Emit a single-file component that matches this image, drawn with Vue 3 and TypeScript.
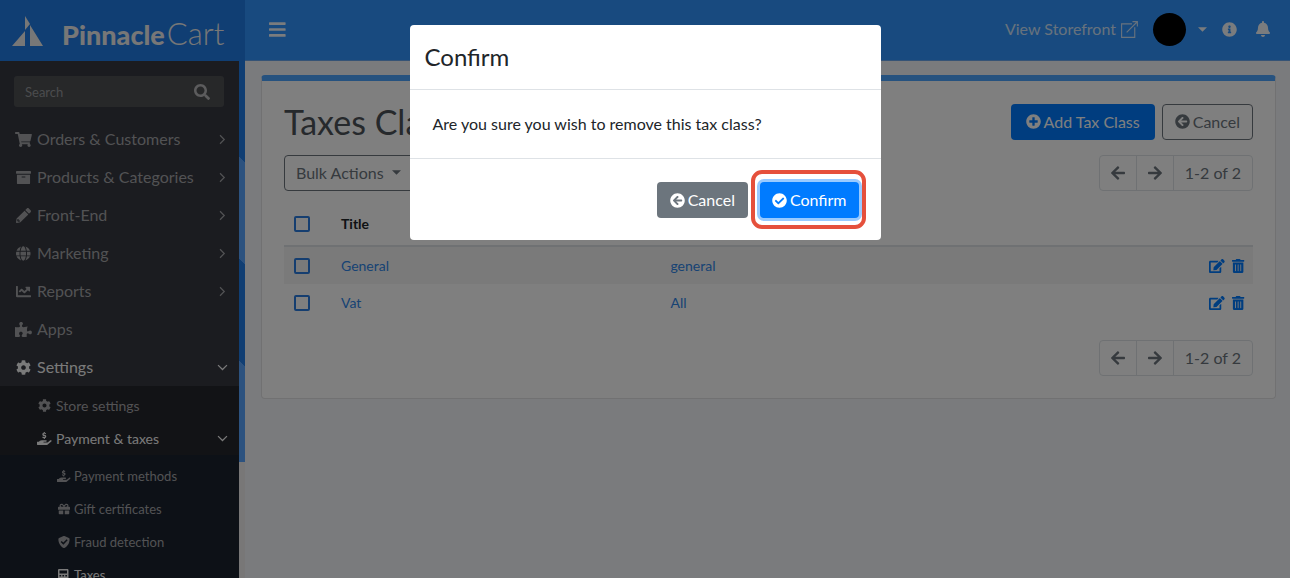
<script setup lang="ts">
import { defineComponent, h, ref } from 'vue'

interface Glyph { w: number; d: string; line?: number }

const glyphs: Record<string, Glyph> = {
  bars: { w: 448, d: 'M16 132h416c8.8 0 16-7.2 16-16V76c0-8.800-7.200-16-16-16H16C7.200 60 0 67.200 0 76v40c0 8.800 7.200 16 16 16zm0 160h416c8.800 0 16-7.200 16-16v-40c0-8.800-7.200-16-16-16H16c-8.800 0-16 7.200-16 16v40c0 8.800 7.200 16 16 16zm0 160h416c8.800 0 16-7.200 16-16v-40c0-8.800-7.200-16-16-16H16c-8.800 0-16 7.200-16 16v40c0 8.800 7.200 16 16 16z' },
  search: { w: 512, d: 'M505 442.7L405.3 343c-4.5-4.5-10.6-7-17-7H372c27.600-35.300 44-79.700 44-128C416 93.100 322.900 0 208 0S0 93.100 0 208s93.100 208 208 208c48.300 0 92.700-16.400 128-44v16.300c0 6.400 2.500 12.500 7 17l99.700 99.700c9.400 9.400 24.600 9.400 33.900 0l28.300-28.300c9.400-9.400 9.400-24.600.1-34zM208 336c-70.700 0-128-57.200-128-128 0-70.700 57.200-128 128-128 70.700 0 128 57.200 128 128 0 70.700-57.200 128-128 128z' },
  cart: { w: 576, d: 'M528.12 301.319l47.273-208C578.806 78.301 567.391 64 551.99 64H159.208l-9.166-44.81C147.758 8.021 137.93 0 126.529 0H24C10.745 0 0 10.745 0 24v16c0 13.255 10.745 24 24 24h69.883l70.248 343.435C147.325 417.1 136 435.222 136 456c0 30.928 25.072 56 56 56s56-25.072 56-56c0-15.674-6.447-29.835-16.824-40h209.647C430.447 426.165 424 440.326 424 456c0 30.928 25.072 56 56 56s56-25.072 56-56c0-22.172-12.888-41.332-31.579-50.405l5.517-24.276c3.413-15.018-8.002-29.319-23.403-29.319H218.117l-6.545-32h293.145c11.206 0 20.92-7.754 23.403-18.681z' },
  archive: { w: 512, d: 'M32 448c0 17.7 14.3 32 32 32h384c17.7 0 32-14.3 32-32V160H32v288zm160-212c0-6.6 5.4-12 12-12h104c6.6 0 12 5.4 12 12v8c0 6.6-5.4 12-12 12H204c-6.6 0-12-5.4-12-12v-8zM480 32H32C14.3 32 0 46.3 0 64v48c0 8.8 7.2 16 16 16h480c8.8 0 16-7.2 16-16V64c0-17.7-14.3-32-32-32z' },
  pencil: { w: 512, d: 'M497.9 142.1l-46.1 46.1c-4.7 4.7-12.3 4.7-17 0l-111-111c-4.7-4.7-4.7-12.3 0-17l46.1-46.1c18.7-18.7 49.1-18.7 67.9 0l60.1 60.1c18.8 18.7 18.8 49.1 0 67.9zM284.2 99.8L21.6 362.4.4 483.9c-2.9 16.4 11.4 30.6 27.8 27.8l121.5-21.3 262.6-262.6c4.7-4.7 4.7-12.3 0-17l-111-111c-4.8-4.7-12.4-4.7-17.1 0zM88 424h48v36.300l-64.500 11.300-31.100-31.100L51.700 376H88v48z' },
  globe: { w: 496, d: 'M336.5 160C322 70.7 287.8 8 248 8s-74 62.7-88.5 152h177zM152 256c0 22.2 1.2 43.5 3.3 64h185.3c2.1-20.5 3.3-41.8 3.3-64s-1.2-43.5-3.3-64H155.3c-2.1 20.5-3.3 41.8-3.3 64zm324.7-96c-28.6-67.9-86.5-120.4-158-141.6 24.4 33.8 41.2 84.7 50 141.6h108zM177.2 18.4C105.8 39.6 47.8 92.1 19.3 160h108c8.7-56.9 25.5-107.8 49.9-141.6zM487.4 192H372.7c2.1 21 3.3 42.5 3.3 64s-1.2 43-3.3 64h114.6c5.5-20.5 8.6-41.8 8.6-64s-3.1-43.5-8.5-64zM120 256c0-21.5 1.2-43 3.3-64H8.6C3.2 212.5 0 233.8 0 256s3.2 43.5 8.6 64h114.6c-2-21-3.2-42.5-3.2-64zm39.5 96c14.5 89.3 48.7 152 88.5 152s74-62.7 88.5-152h-177zm159.3 141.6c71.4-21.2 129.4-73.7 158-141.6h-108c-8.8 56.9-25.6 107.8-50 141.6zM19.3 352c28.6 67.9 86.5 120.4 158 141.6-24.4-33.8-41.2-84.7-50-141.6h-108z' },
  chart: { w: 512, d: 'M496 384H64V80c0-8.84-7.16-16-16-16H16C7.16 64 0 71.16 0 80v336c0 17.67 14.33 32 32 32h464c8.84 0 16-7.16 16-16v-32c0-8.84-7.16-16-16-16zM464 96H345.94c-21.38 0-32.09 25.85-16.97 40.97l32.4 32.4L288 242.75l-73.37-73.37c-12.5-12.5-32.76-12.5-45.25 0l-68.69 68.69c-6.25 6.25-6.25 16.38 0 22.63l22.62 22.62c6.25 6.25 16.38 6.25 22.63 0L192 237.25l73.37 73.37c12.5 12.5 32.76 12.5 45.25 0l96-96 32.4 32.4c15.12 15.12 40.97 4.41 40.97-16.97V112c.01-8.84-7.15-16-15.99-16z' },
  puzzle: { w: 576, d: 'M519.442 288.651c-41.519 0-59.5 31.593-82.058 31.593C377.409 320.244 432 144 432 144s-196.288 80-196.288-3.297c0-35.827 36.288-46.25 36.288-85.985C272 19.216 243.885 0 210.539 0c-34.654 0-66.366 18.891-66.366 56.346 0 41.364 31.711 59.277 31.711 81.75C175.885 207.719 0 166.758 0 166.758v333.237s178.635 41.047 178.635-28.662c0-22.473-40-40.107-40-81.471 0-37.456 29.25-56.346 63.577-56.346 33.673 0 61.788 19.216 61.788 54.717 0 39.735-36.288 50.158-36.288 85.985 0 60.803 129.675 25.73 181.23 25.73 0 0-34.725-120.101 25.827-120.101 35.962 0 46.423 36.152 86.308 36.152C556.712 416 576 387.99 576 354.443c0-34.199-18.962-65.792-56.558-65.792z' },
  cog: { w: 512, d: 'M487.4 315.7l-42.6-24.6c4.3-23.2 4.3-47 0-70.2l42.6-24.6c4.9-2.8 7.1-8.6 5.5-14-11.1-35.6-30-67.8-54.7-94.6-3.8-4.1-10-5.1-14.8-2.3L380.8 110c-17.9-15.4-38.5-27.3-60.8-35.1V25.8c0-5.6-3.9-10.5-9.4-11.7-36.7-8.2-74.3-7.8-109.2 0-5.5 1.2-9.4 6.1-9.4 11.7V75c-22.2 7.9-42.8 19.8-60.8 35.1L88.7 85.5c-4.9-2.8-11-1.9-14.8 2.3-24.7 26.7-43.6 58.9-54.7 94.6-1.7 5.4.6 11.2 5.5 14L67.3 221c-4.3 23.2-4.3 47 0 70.2l-42.6 24.6c-4.9 2.8-7.1 8.6-5.5 14 11.1 35.6 30 67.8 54.7 94.6 3.8 4.1 10 5.1 14.8 2.3l42.6-24.6c17.9 15.4 38.5 27.3 60.8 35.1v49.2c0 5.6 3.9 10.5 9.4 11.7 36.7 8.2 74.3 7.8 109.2 0 5.5-1.2 9.4-6.1 9.4-11.7v-49.2c22.2-7.9 42.8-19.8 60.8-35.1l42.6 24.6c4.9 2.8 11 1.9 14.8-2.3 24.7-26.7 43.6-58.9 54.7-94.6 1.5-5.5-.7-11.3-5.6-14.1zM256 336c-44.1 0-80-35.9-80-80s35.900-80 80-80 80 35.900 80 80-35.900 80-80 80z' },
  hand: { w: 576, d: 'M565.3 328.1c-11.8-10.7-30.2-10-42.6 0L430.3 402c-11.3 9.1-25.4 14-40 14H272c-8.8 0-16-7.2-16-16s7.200-16 16-16h78.300c15.900 0 30.700-10.900 33.300-26.600 3.300-20-12.100-37.400-31.600-37.400H192c-27 0-53.100 9.300-74.100 26.300L71.400 384H16c-8.800 0-16 7.200-16 16v96c0 8.800 7.200 16 16 16h356.800c14.500 0 28.600-4.900 40-14L564 377c15.200-12.100 16.400-35.300 1.300-48.900zM266 0h44v32c20 2 36 9 49 18l-23 36c-17-11-32-15-47-15-16 0-25 6-25 15 0 11 12 15 38 23 38 12 63 29 63 66 0 34-22 57-55 64v33h-44v-32c-24-2-45-11-61-24l25-35c17 13 34 19 52 19 19 0 29-6 29-17 0-12-14-17-40-25-36-11-61-28-61-64 0-32 21-54 55-61z' },
  gift: { w: 512, d: 'M32 448c0 17.7 14.3 32 32 32h160V320H32v128zm256 32h160c17.7 0 32-14.3 32-32V320H288v160zm192-320h-42.1c6.2-12.1 10.1-25.5 10.1-40 0-48.5-39.5-88-88-88-41.6 0-68.5 21.3-103 68.3-34.5-47-61.4-68.3-103-68.3-48.5 0-88 39.5-88 88 0 14.5 3.8 27.9 10.1 40H32c-17.7 0-32 14.3-32 32v80c0 8.8 7.2 16 16 16h480c8.8 0 16-7.2 16-16v-80c0-17.7-14.3-32-32-32zm-326.1 0c-22.1 0-40-17.9-40-40s17.9-40 40-40c19.9 0 34.6 3.3 86.1 80h-86.1zm206.1 0h-86.1c51.400-76.500 65.700-80 86.100-80 22.100 0 40 17.900 40 40s-17.900 40-40 40z' },
  shield: { w: 512, d: 'M466.5 83.700l-192-80a48 48 0 0 0-36.900 0l-192 80C27.700 91.100 16 108.600 16 128c0 198.500 114.500 335.700 221.500 380.300 11.800 4.900 25.100 4.900 36.900 0C360.100 472.600 496 349.300 496 128c0-19.400-11.700-36.900-29.500-44.300zM228 370L112 254l44-44 72 72 140-140 44 44z' },
  calculator: { w: 448, d: 'M48 0h352c26 0 48 22 48 48v416c0 26-22 48-48 48H48c-26 0-48-22-48-48V48C0 22 22 0 48 0zm16 64v128h320V64zm0 192v64h72v-64zm124 0v64h72v-64zm124 0v64h72v-64zM64 384v64h72v-64zm124 0v64h72v-64zm124 0v64h72v-64z' },
  plusCircle: { w: 512, d: 'M256 8C119 8 8 119 8 256s111 248 248 248 248-111 248-248S393 8 256 8zm144 276c0 6.6-5.4 12-12 12h-92v92c0 6.6-5.4 12-12 12h-56c-6.6 0-12-5.4-12-12v-92h-92c-6.6 0-12-5.4-12-12v-56c0-6.6 5.4-12 12-12h92v-92c0-6.6 5.4-12 12-12h56c6.6 0 12 5.4 12 12v92h92c6.6 0 12 5.4 12 12v56z' },
  backCircle: { w: 512, d: 'M256 504C119 504 8 393 8 256S119 8 256 8s248 111 248 248-111 248-248 248zm28.9-143.6L209.4 288H392c13.3 0 24-10.7 24-24v-16c0-13.3-10.7-24-24-24H209.4l75.5-72.4c9.7-9.3 9.9-24.8.4-34.3l-11-10.9c-9.4-9.4-24.6-9.4-33.9 0L107.7 239c-9.4 9.4-9.4 24.6 0 33.9l132.7 132.7c9.4 9.4 24.6 9.4 33.9 0l11-10.9c9.5-9.5 9.3-25-.4-34.3z' },
  checkCircle: { w: 512, d: 'M504 256c0 136.967-111.033 248-248 248S8 392.967 8 256 119.033 8 256 8s248 111.033 248 248zM227.314 387.314l184-184c6.248-6.248 6.248-16.379 0-22.627l-22.627-22.627c-6.248-6.249-16.379-6.249-22.628 0L216 308.118l-70.059-70.059c-6.248-6.248-16.379-6.248-22.628 0l-22.627 22.627c-6.248 6.248-6.248 16.379 0 22.627l104 104c6.249 6.249 16.379 6.249 22.628.001z' },
  arrowLeft: { w: 448, d: 'M257.5 445.1l-22.2 22.2c-9.4 9.4-24.6 9.4-33.9 0L7 273c-9.4-9.4-9.4-24.6 0-33.9L201.4 44.7c9.4-9.4 24.6-9.4 33.9 0l22.2 22.2c9.5 9.5 9.3 25-.4 34.3L136.6 216H424c13.3 0 24 10.7 24 24v32c0 13.3-10.7 24-24 24H136.6l120.5 114.8c9.8 9.3 10 24.8.4 34.3z' },
  arrowRight: { w: 448, d: 'M190.5 66.9l22.2-22.2c9.4-9.4 24.6-9.4 33.9 0L441 239c9.4 9.4 9.4 24.6 0 33.9L246.6 467.3c-9.4 9.4-24.6 9.4-33.9 0l-22.2-22.2c-9.5-9.5-9.3-25 .4-34.3L311.4 296H24c-13.3 0-24-10.7-24-24v-32c0-13.3 10.7-24 24-24h287.4L190.9 101.2c-9.8-9.3-10-24.8-.4-34.3z' },
  edit: { w: 576, d: 'M402.6 83.2l90.2 90.2c3.8 3.8 3.8 10 0 13.8L274.4 405.6l-92.8 10.3c-12.4 1.4-22.9-9.1-21.5-21.5l10.3-92.8L388.8 83.2c3.8-3.8 10-3.8 13.8 0zm162-22.9l-48.8-48.8c-15.2-15.2-39.9-15.2-55.2 0l-35.4 35.4c-3.8 3.8-3.8 10 0 13.8l90.2 90.2c3.8 3.8 10 3.8 13.8 0l35.4-35.4c15.2-15.3 15.2-40 0-55.2zM384 346.2V448H64V128h229.8c3.2 0 6.2-1.3 8.5-3.5l40-40c7.6-7.6 2.2-20.5-8.5-20.5H48C21.5 64 0 85.5 0 112v352c0 26.5 21.5 48 48 48h352c26.5 0 48-21.5 48-48V306.2c0-10.7-12.9-16-20.5-8.5l-40 40c-2.2 2.3-3.5 5.3-3.5 8.5z' },
  trash: { w: 448, d: 'M32 464a48 48 0 0 0 48 48h288a48 48 0 0 0 48-48V128H32zm272-256a16 16 0 0 1 32 0v224a16 16 0 0 1-32 0zm-96 0a16 16 0 0 1 32 0v224a16 16 0 0 1-32 0zm-96 0a16 16 0 0 1 32 0v224a16 16 0 0 1-32 0zM432 32H312l-9.4-18.7A24 24 0 0 0 281.1 0H166.8a23.72 23.72 0 0 0-21.4 13.3L136 32H16A16 16 0 0 0 0 48v32a16 16 0 0 0 16 16h416a16 16 0 0 0 16-16V48a16 16 0 0 0-16-16z' },
  info: { w: 512, d: 'M256 8C119 8 8 119 8 256c0 137 111 248 248 248s248-111 248-248C504 119 393 8 256 8zm0 110c23.2 0 42 18.8 42 42s-18.8 42-42 42-42-18.8-42-42 18.800-42 42-42zm56 254c0 6.600-5.400 12-12 12h-88c-6.600 0-12-5.400-12-12v-24c0-6.600 5.400-12 12-12h12v-64h-12c-6.600 0-12-5.400-12-12v-24c0-6.600 5.400-12 12-12h64c6.600 0 12 5.400 12 12v100h12c6.600 0 12 5.400 12 12v24z' },
  bell: { w: 448, d: 'M224 512c35.32 0 63.97-28.65 63.97-64H160.03c0 35.35 28.65 64 63.97 64zm215.39-149.71c-19.32-20.76-55.47-51.99-55.47-154.29 0-77.7-54.48-139.9-127.94-155.16V32c0-17.67-14.32-32-31.98-32s-31.98 14.33-31.98 32v20.84C118.56 68.1 64.08 130.3 64.08 208c0 102.3-36.15 133.53-55.47 154.29-6 6.45-8.66 14.16-8.61 21.71.11 16.4 12.98 32 32.1 32h383.8c19.12 0 32-15.6 32.1-32 .05-7.55-2.61-15.27-8.61-21.71z' },
  external: { w: 512, line: 34, d: 'M330 85H18v409h396V190M170 342L490 22M345 20h148v148' },
  chevronRight: { w: 320, line: 48, d: 'M80 90l166 166L80 422' },
  chevronDown: { w: 512, line: 48, d: 'M80 160l176 176 176-176' },
  caret: { w: 512, d: 'M0 128h512L256 384z' },
}

const Icon = defineComponent({
  props: { name: { type: String, required: true } },
  setup(props) {
    return () => {
      const g = glyphs[props.name]
      return h('svg', { class: 'icon', viewBox: `0 0 ${g.w} 512`, 'aria-hidden': 'true' }, [
        h('path', g.line
          ? { d: g.d, fill: 'none', stroke: 'currentColor', 'stroke-width': g.line }
          : { d: g.d, fill: 'currentColor', 'fill-rule': 'evenodd' }),
      ])
    }
  },
})

const menu = [
  { label: 'Orders & Customers', icon: 'cart', arrow: 'chevronRight' },
  { label: 'Products & Categories', icon: 'archive', arrow: 'chevronRight' },
  { label: 'Front-End', icon: 'pencil', arrow: 'chevronRight' },
  { label: 'Marketing', icon: 'globe', arrow: 'chevronRight' },
  { label: 'Reports', icon: 'chart', arrow: 'chevronRight' },
  { label: 'Apps', icon: 'puzzle', arrow: '' },
  { label: 'Settings', icon: 'cog', arrow: 'chevronDown', active: true },
]
const paymentMenu = [
  { label: 'Payment methods', icon: 'hand' },
  { label: 'Gift certificates', icon: 'gift' },
  { label: 'Fraud detection', icon: 'shield' },
  { label: 'Taxes', icon: 'calculator', active: true },
]
const rows = ref([
  { title: 'General', key: 'general', selected: false },
  { title: 'Vat', key: 'All', selected: false },
])
const search = ref('')
const allSelected = ref(false)
</script>

<template>
  <div class="app">
    <aside class="side">
      <a class="brand" href="#" aria-label="PinnacleCart">
        <svg class="mark" viewBox="0 0 32 32" aria-hidden="true">
          <path fill="currentColor" d="M13 1l5 8-5 6zM0 31L13 16v15zM18 10l13 21H18z" />
        </svg>
        <span class="word"><b>Pinnacle</b><span class="thin">Cart</span></span>
      </a>
      <div class="side-body">
        <nav class="nav">
          <form class="search" @submit.prevent>
            <input v-model="search" type="search" placeholder="Search" aria-label="Search">
            <button type="submit" aria-label="Search"><Icon name="search" /></button>
          </form>
          <a v-for="m in menu" :key="m.label" class="item" :class="{ active: m.active }" href="#">
            <span class="lead"><Icon :name="m.icon" /></span>{{ m.label }}
            <span v-if="m.arrow" class="arrow"><Icon :name="m.arrow" /></span>
          </a>
          <div class="sub">
            <a class="item" href="#"><span class="lead"><Icon name="cog" /></span>Store settings</a>
            <a class="item active" href="#">
              <span class="lead"><Icon name="hand" /></span>Payment &amp; taxes
              <span class="arrow"><Icon name="chevronDown" /></span>
            </a>
          </div>
          <div class="sub deep">
            <a v-for="m in paymentMenu" :key="m.label" class="item" :class="{ active: m.active }" href="#">
              <span class="lead"><Icon :name="m.icon" /></span>{{ m.label }}
            </a>
          </div>
        </nav>
        <div class="strip"></div>
      </div>
    </aside>

    <div class="content">
      <header class="top">
        <button class="plain burger" type="button" aria-label="Menu"><Icon name="bars" /></button>
        <a class="store" href="#">View Storefront <Icon name="external" /></a>
        <button class="plain user" type="button" aria-label="Account">
          <span class="avatar"></span><Icon name="caret" />
        </button>
        <button class="plain info" type="button" aria-label="Information"><Icon name="info" /></button>
        <button class="plain" type="button" aria-label="Notifications"><Icon name="bell" /></button>
      </header>

      <main class="card">
        <div class="bar">
          <h1>Taxes Classes</h1>
          <div class="actions">
            <button class="btn primary add" type="button"><Icon name="plusCircle" />Add Tax Class</button>
            <button class="btn outline" type="button"><Icon name="backCircle" />Cancel</button>
          </div>
        </div>
        <div class="bar tools">
          <button class="btn outline bulk" type="button">Bulk Actions<Icon name="caret" /></button>
          <div class="pager">
            <button type="button" aria-label="Previous page"><Icon name="arrowLeft" /></button>
            <button type="button" aria-label="Next page"><Icon name="arrowRight" /></button>
            <span>1-2 of 2</span>
          </div>
        </div>
        <table>
          <thead>
            <tr>
              <th class="pick"><input v-model="allSelected" type="checkbox" aria-label="Select all"></th>
              <th class="title">Title</th>
              <td></td>
              <td class="ops"></td>
            </tr>
          </thead>
          <tbody>
            <tr v-for="r in rows" :key="r.title">
              <td class="pick"><input v-model="r.selected" type="checkbox" :aria-label="`Select ${r.title}`"></td>
              <td><a href="#">{{ r.title }}</a></td>
              <td><a href="#">{{ r.key }}</a></td>
              <td class="ops">
                <div class="ops-row">
                  <a href="#" :aria-label="`Edit ${r.title}`"><Icon name="edit" /></a>
                  <a href="#" :aria-label="`Delete ${r.title}`"><Icon name="trash" /></a>
                </div>
              </td>
            </tr>
          </tbody>
        </table>
        <div class="bar end">
          <div class="pager">
            <button type="button" aria-label="Previous page"><Icon name="arrowLeft" /></button>
            <button type="button" aria-label="Next page"><Icon name="arrowRight" /></button>
            <span>1-2 of 2</span>
          </div>
        </div>
      </main>
    </div>

    <div class="backdrop">
      <section class="modal" role="dialog" aria-modal="true" aria-labelledby="confirm-title">
        <h2 id="confirm-title">Confirm</h2>
        <p>Are you sure you wish to remove this tax class?</p>
        <footer>
          <button class="btn secondary" type="button"><Icon name="backCircle" />Cancel</button>
          <span class="marked">
            <button class="btn primary focused" type="button"><Icon name="checkCircle" />Confirm</button>
          </span>
        </footer>
      </section>
    </div>
  </div>
</template>

<style>
body { margin: 0; background: #f5f7fa; }
</style>

<style scoped>
* { box-sizing: border-box; }
.app {
  display: flex;
  height: 100vh;
  overflow: hidden;
  font: 16px/24px Lato, "Liberation Sans", sans-serif;
  color: #343a40;
}
a { color: inherit; text-decoration: none; }
button, input { font: inherit; color: inherit; }
button { cursor: pointer; }
:deep(.icon) { display: block; height: 16px; flex: none; overflow: visible; }

.side { flex: none; width: 245px; display: flex; flex-direction: column; }
.brand {
  flex: none;
  display: flex;
  align-items: center;
  gap: 18px;
  height: 61px;
  padding: 0 12px;
  background: #207ce6;
  color: #eeeeee;
}
.mark { width: 32px; height: 32px; }
.word { display: flex; align-items: baseline; gap: 2px; font-size: 27px; line-height: 32px; padding-top: 6px; }
.word b { font-weight: 900; }
.thin { font-size: 31px; font-weight: 300; }
.side-body { flex: 1; min-height: 0; display: flex; background: #f0eeee; }
.nav { flex: 1; overflow: hidden; background: #363840; color: #a4a5a8; }
.strip {
  width: 6px;
  height: 401px;
  background: linear-gradient(225deg, #207ce6 25%, #58a4ff 25%, #58a4ff 50%, #207ce6 50%, #207ce6 75%, #58a4ff 75%);
}
.search {
  display: flex;
  align-items: center;
  height: 31px;
  margin: 15px 15px 13px 14px;
  padding: 0 14px 0 11px;
  border-radius: 3px;
  background: #4e5053;
}
.search input { flex: 1; min-width: 0; padding: 0; border: 0; outline: 0; background: none; font-size: 13px; }
.search input::placeholder { color: #96989b; opacity: 1; }
.search button { padding: 0; border: 0; background: none; color: #b8b8ba; }
.item { display: flex; align-items: center; height: 38px; padding: 0 12px 0 14px; white-space: nowrap; }
.item.active { color: #f4f4f4; }
.lead { display: flex; justify-content: center; width: 19px; margin-right: 4px; }
.item :deep(.icon) { height: 15px; }
.arrow { display: flex; justify-content: center; width: 10px; margin-left: auto; }
.item .arrow :deep(.icon) { height: 13px; }
.sub { padding-top: 3px; background: #25262c; font-size: 14px; }
.sub .item { height: 33px; padding-left: 36px; }
.sub .lead { width: 17px; margin-right: 3px; }
.sub .item :deep(.icon) { height: 13px; }
.deep { padding-top: 4px; background: #1b222f; font-size: 13px; }
.deep .item { padding-left: 55px; }
.deep .lead { margin-right: 2px; }
.deep .item :deep(.icon) { height: 12px; }

.content { flex: 1; min-width: 0; }
.top {
  display: flex;
  align-items: center;
  height: 61px;
  padding: 0 20px 2px 24px;
  border-bottom: 1px solid #6aa6ec;
  background: #3094fe;
  color: #f4f8fc;
}
.plain { display: flex; align-items: center; padding: 0; border: 0; background: none; }
.burger { margin-right: auto; }
.burger :deep(.icon) { height: 19px; }
.store { display: flex; align-items: center; gap: 5px; color: #cfe4fb; }
.store :deep(.icon) { height: 17px; }
.user { gap: 12px; margin: 0 15px; }
.user :deep(.icon) { height: 9px; }
.avatar { width: 33px; height: 33px; border-radius: 50%; background: #000; }
.info { margin-right: 19px; }
.plain.info :deep(.icon) { height: 15px; }

.card {
  margin: 14px 14px 0 16px;
  padding: 22px 22px;
  border: 1px solid #e2e2e4;
  border-top: 6px solid #4ca4ff;
  border-radius: 4px;
  background: #fff;
}
.bar { display: flex; align-items: center; justify-content: space-between; height: 37px; }
.tools { margin-top: 14px; }
.end { justify-content: flex-end; margin-top: 17px; }
h1 { margin: 0; font-size: 34px; line-height: 36px; font-weight: 400; color: #4d5359; }
.actions { display: flex; gap: 7px; }
.btn {
  display: flex;
  align-items: center;
  gap: 3px;
  height: 36px;
  padding: 0 12px;
  border: 1px solid transparent;
  border-radius: 4px;
  white-space: nowrap;
}
.btn :deep(.icon) { height: 15px; }
.primary { background: #007bff; color: #fff; }
.secondary { background: #6c757d; color: #fff; }
.outline { background: transparent; border-color: #6c757d; color: #6c757d; }
.btn.add { padding: 0 14px; }
.btn.bulk { gap: 8px; width: 136px; padding: 0 11px; }
.bulk :deep(.icon) { height: 9px; }
.pager { display: flex; height: 36px; border: 1px solid #dee2e6; border-radius: 4px; color: #6c757d; }
.pager button { display: flex; align-items: center; justify-content: center; width: 37px; padding: 0; border: 0; border-right: 1px solid #dee2e6; background: none; }
.pager span { padding: 0 11px; line-height: 34px; }

table { width: 100%; margin-top: 12px; border-collapse: collapse; table-layout: fixed; font-size: 14px; line-height: 20px; }
th, td { height: 38px; padding: 0; text-align: left; vertical-align: middle; }
thead th, thead td { height: 43px; border-bottom: 2px solid #dee2e6; color: #212529; }
.pick { width: 57px; padding-left: 10px; }
.title { width: 34%; }
.ops { width: 44px; }
.ops-row { display: flex; gap: 7px; }
.ops-row :deep(.icon) { height: 14px; }
tbody tr:nth-child(odd) { background: #f5f5f5; }
tbody a { color: #2f86e8; }
.ops-row a { color: #007bff; }
input[type="checkbox"] {
  display: block;
  appearance: none;
  width: 16px;
  height: 16px;
  margin: 0;
  border: 2px solid #2a7de1;
  border-radius: 2px;
}

.backdrop {
  position: fixed;
  inset: 0;
  display: flex;
  align-items: flex-start;
  justify-content: center;
  padding: 25px 16px;
  background: rgba(0, 0, 0, 0.5);
}
.modal { width: 100%; max-width: 471px; border-radius: 4px; background: #fff; color: #212529; }
.modal h2 { margin: 0; padding: 16px 15px; border-bottom: 1px solid #dee2e6; font-size: 24px; line-height: 32px; font-weight: 400; }
.modal p { margin: 0; padding: 22px 23px; border-bottom: 1px solid #dee2e6; }
.modal footer { display: flex; justify-content: flex-end; gap: 12px; padding: 23px 22px 22px; }
.marked { position: relative; }
.marked::after {
  content: "";
  position: absolute;
  inset: -12px -7px -11px -9px;
  border: 4px solid #e5503c;
  border-radius: 11px;
  pointer-events: none;
}
.btn.focused { padding: 0 11px; box-shadow: 0 0 0 3px #99caff; }
</style>
